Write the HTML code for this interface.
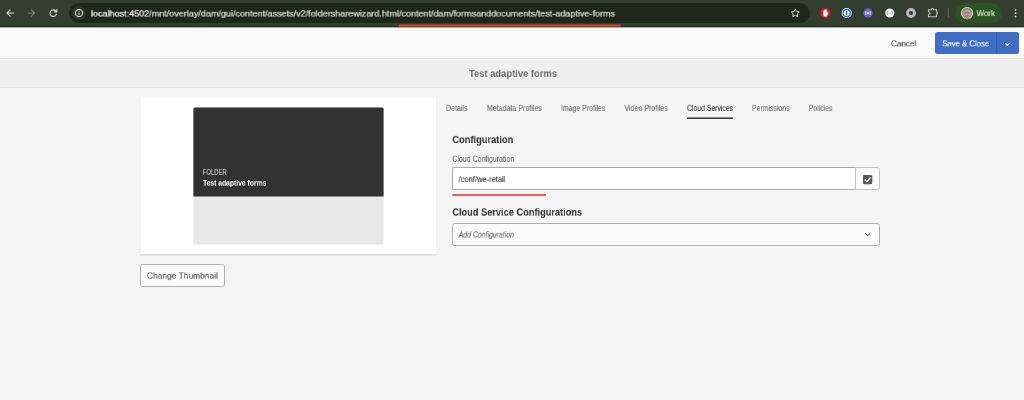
<!DOCTYPE html>
<html lang="en">
<head>
<meta charset="utf-8">
<title>Test adaptive forms</title>
<style>
html,body{margin:0;padding:0}
body{width:1024px;height:400px;position:relative;overflow:hidden;background:#f5f5f5;font-family:"Liberation Sans",sans-serif}
.a{position:absolute}
.t{position:absolute;left:0;top:0;white-space:nowrap;transform-origin:0 0;will-change:transform}
svg{position:absolute;overflow:visible}
</style>
</head>
<body>
<!-- browser toolbar -->
<div class="a" style="left:0;top:0;width:1024px;height:26px;background:#343e2f"></div>
<div class="a" style="left:0;top:26px;width:1024px;height:1px;background:#2a3424"></div>
<div class="a" style="left:69px;top:3px;width:741px;height:20px;border-radius:10px;background:#1e281a"></div>
<div class="a" style="left:72px;top:6px;width:14px;height:14px;border-radius:7px;background:#2c3727"></div>
<!-- nav icons -->
<svg style="left:0;top:0" width="1024" height="27" viewBox="0 0 1024 27">
  <!-- back -->
  <g fill="none" stroke="#d3dacd" stroke-width="1.1" stroke-linecap="round" stroke-linejoin="round">
    <path d="M13.6 13H7.2M10.2 9.8L7 13l3.200 3.200"/>
  </g>
  <!-- forward -->
  <g fill="none" stroke="#76816f" stroke-width="1.1" stroke-linecap="round" stroke-linejoin="round">
    <path d="M28 13h6.400M31.4 9.8L34.6 13l-3.200 3.200"/>
  </g>
  <!-- reload -->
  <g fill="none" stroke="#d3dacd" stroke-width="1.1" stroke-linecap="round" stroke-linejoin="round">
    <path d="M56.100 11.500A3.300 3.300 0 1 0 56.400 14.100"/>
    <path d="M56.800 9.600V11.900H54.500" />
  </g>
  <!-- info -->
  <circle cx="79" cy="13" r="3.650" fill="none" stroke="#e4e9df" stroke-width="1"/>
  <path d="M79 12.500V15" stroke="#e4e9df" stroke-width="0.9" fill="none"/>
  <circle cx="79" cy="11.100" r="0.550" fill="#e4e9df"/>
  <!-- star -->
  <path d="M795.300 9.100l1.250 2.550 2.750 0.350-2.050 1.950 0.550 2.750-2.500-1.350-2.500 1.350 0.550-2.750-2.050-1.950 2.750-0.350z" fill="none" stroke="#d3dacd" stroke-width="1" stroke-linejoin="round"/>
  <!-- red hand ext -->
  <path d="M829.77 14.89L827.09 17.57L823.31 17.57L820.63 14.89L820.63 11.11L823.31 8.43L827.09 8.43L829.77 11.11Z" fill="#d7232a" stroke="#d7232a" stroke-width="0.5" stroke-linejoin="round"/>
  <path d="M823.200 13.900V11.100a0.450 0.450 0 0 1 0.900 0V10.200a0.450 0.450 0 0 1 0.900 0V9.800a0.450 0.450 0 0 1 0.900 0V10.200a0.450 0.450 0 0 1 0.900 0V13.300L827.700 12.400a0.500 0.500 0 0 1 0.700 0.700L826.600 16.400H824.400Q823.200 15.600 823.200 13.900Z" fill="#ffffff"/>
  <!-- 1password -->
  <circle cx="846.700" cy="13" r="5.100" fill="#f4f6f8"/>
  <circle cx="846.700" cy="13" r="3.600" fill="none" stroke="#1a78f0" stroke-width="1.500"/>
  <rect x="846.200" y="10.900" width="1" height="4.200" rx="0.400" fill="#222"/>
  <!-- purple -->
  <circle cx="868" cy="13" r="4.700" fill="#6d60cb"/>
  <path d="M865.700 11v4M870.300 11v4M867.200 12.300h1.600v1.600h-1.600z" stroke="#e9e4ff" stroke-width="0.8" fill="#e9e4ff"/>
  <!-- white -->
  <circle cx="889.800" cy="13" r="4.600" fill="#f7f7f7"/>
  <path d="M887.700 11.300Q886.600 13 887.700 14.700M891.900 11.300Q893 13 891.900 14.700" stroke="#8f8f8f" stroke-width="0.8" fill="none" stroke-linecap="round"/><circle cx="889" cy="13" r="0.500" fill="#9a9a9a"/><circle cx="890.600" cy="13" r="0.500" fill="#9a9a9a"/>
  <!-- gray ring -->
  <circle cx="911" cy="13" r="3.500" fill="none" stroke="#bcbcbc" stroke-width="2.800"/>
  <!-- puzzle -->
  <path d="M928.500 9.700H931.400A1.100 1.100 0 0 1 933.600 9.700H936.500V12A1.100 1.100 0 0 1 936.500 14.200V16.800H928.500V14.700L930.300 13.150L928.500 11.600Z" fill="none" stroke="#b9c3b0" stroke-width="1.100" stroke-linejoin="miter"/>
  <!-- separator -->
  <rect x="948.100" y="8.100" width="1" height="9.600" fill="#59644f"/>
  <!-- dots -->
  <circle cx="1015.500" cy="9.800" r="0.900" fill="#d9dfd3"/>
  <circle cx="1015.500" cy="13.150" r="0.900" fill="#d9dfd3"/>
  <circle cx="1015.500" cy="16.500" r="0.900" fill="#d9dfd3"/>
</svg>
<!-- profile pill -->
<div class="a" style="left:955px;top:3px;width:47.300px;height:20px;border-radius:10px;background:#2c5324"></div>
<svg style="left:960.800px;top:6.900px" width="12.200" height="12.200" viewBox="0 0 12.200 12.200">
  <defs><clipPath id="av"><circle cx="6.100" cy="6.100" r="5.400"/></clipPath></defs>
  <circle cx="6.100" cy="6.100" r="6.100" fill="#e3e3e3"/>
  <g clip-path="url(#av)">
    <rect x="0" y="0" width="12.200" height="12.200" fill="#a9a7a4"/>
    <ellipse cx="6.100" cy="3.200" rx="4.900" ry="3" fill="#8f8e8c"/>
    <ellipse cx="6.100" cy="7.200" rx="4.200" ry="4.400" fill="#bf978a"/>
    <rect x="3.200" y="5.500" width="5.800" height="0.800" fill="#86695f"/>
    <ellipse cx="6.100" cy="9" rx="2.200" ry="1.100" fill="#a77769"/>
    <path d="M0 12.200V11.300Q6.100 10.300 12.200 11.300V12.200Z" fill="#6a5a58"/>
  </g>
</svg>
<!-- red line under url -->


<!-- action bar -->
<div class="a" style="left:0;top:27px;width:1024px;height:31px;background:#fafafa"></div>
<div class="a" style="left:0;top:27px;width:1024px;height:1px;background:#a4a9a0"></div>
<div class="a" style="left:0;top:28px;width:1024px;height:1px;background:#ffffff"></div>
<div class="a" style="left:0;top:58px;width:1024px;height:29.500px;background:#efefef;border-top:1px solid #e6e6e6;border-bottom:1px solid #e1e1e1;box-sizing:border-box"></div>
<!-- save & close button -->
<div class="a" style="left:935px;top:32px;width:84px;height:22px;border-radius:2.500px;background:#3f6cc4"></div>
<div class="a" style="left:995.800px;top:32px;width:0.700px;height:22px;background:#3560b3"></div>
<svg style="left:1005.300px;top:42.900px" width="5" height="3" viewBox="0 0 5 3"><path d="M0.500 0.500L2.400 2.400l1.900-1.900" fill="none" stroke="#fff" stroke-width="1.150" stroke-linecap="round" stroke-linejoin="round"/></svg>

<!-- left card -->
<svg style="left:0;top:0" width="1024" height="400" viewBox="0 0 1024 400">
  <rect x="139.900" y="97.300" width="296.900" height="158" rx="0.500" fill="#000" opacity="0.050"/>
  <rect x="140.300" y="254" width="296.100" height="1.300" fill="#000" opacity="0.130"/>
  <rect x="140.300" y="97.200" width="296.100" height="157.200" fill="#ffffff"/>
  <rect x="193.400" y="107.500" width="190.200" height="136.900" rx="1.500" fill="#e8e8e8"/>
  <path d="M193.400 196.600V109A1.500 1.500 0 0 1 194.900 107.500H382.100A1.500 1.500 0 0 1 383.600 109V196.600Z" fill="#323232"/>
</svg>
<!-- change thumbnail button -->
<div class="a" style="left:140px;top:264px;width:85px;height:23px;box-sizing:border-box;border:1px solid #b1b1b1;border-radius:2.500px;background:#fbfbfb"></div>

<!-- tabs underline -->


<!-- cloud configuration input -->
<div class="a" style="left:452px;top:167px;width:404px;height:23px;box-sizing:border-box;border:1px solid #a8a8a8;border-right:0;border-radius:2px 0 0 2px;background:#fff"></div>
<div class="a" style="left:855px;top:167px;width:25px;height:23px;box-sizing:border-box;border:1px solid #c2c2c2;border-radius:0 2.500px 2.500px 0;background:#fafafa"></div>
<svg style="left:862.900px;top:175px" width="10" height="10" viewBox="0 0 10 10"><rect x="0" y="0" width="9.300" height="9.300" rx="1.400" fill="#5a5a5a"/><path d="M2.100 4.900l1.800 1.800 3.300-3.800" fill="none" stroke="#fff" stroke-width="1.300" stroke-linecap="round" stroke-linejoin="round"/></svg>
<!-- red invalid line -->


<!-- select -->
<div class="a" style="left:452px;top:223px;width:428px;height:23px;box-sizing:border-box;border:1px solid #afafaf;border-radius:2.500px;background:#fbfbfb"></div>
<svg style="left:864.900px;top:232.900px" width="6" height="4" viewBox="0 0 6 4"><path d="M0.500 0.500L2.700 2.700l2.200-2.200" fill="none" stroke="#6a6a6a" stroke-width="1.100" stroke-linecap="round" stroke-linejoin="round"/></svg>

<!-- thin lines (fractional, antialiased) -->
<svg style="left:0;top:0" width="1024" height="400" viewBox="0 0 1024 400">
  <rect x="398.900" y="24.600" width="221.800" height="1.900" fill="#ee4422"/>
  <rect x="687" y="117.450" width="45.900" height="1.550" fill="#3c3c3c"/>
  <rect x="452.300" y="194.100" width="93.700" height="1.800" fill="#e8543c"/>
</svg>
<div class="t" id="url" style="font-size:10.19px;line-height:13px;font-weight:400;color:#dde1d8;transform:translate(91.00px,8.64px) scale(0.8869,0.7863);-webkit-text-stroke:0.24px;"><span style="color:#ffffff">localhost:4502</span>/mnt/overlay/dam/gui/content/assets/v2/foldersharewizard.html/content/dam/formsanddocuments/test-adaptive-forms</div>
<div class="t" id="work" style="font-size:10.19px;line-height:13px;font-weight:400;color:#e6eedf;transform:translate(976.60px,8.44px) scale(0.7767,0.7765);-webkit-text-stroke:0.15px;">Work</div>
<div class="t" id="cancel" style="font-size:11.65px;line-height:14px;font-weight:400;color:#4e4e4e;transform:translate(891.00px,38.08px) scale(0.6952,0.7568);-webkit-text-stroke:0.17px;">Cancel</div>
<div class="t" id="save" style="font-size:11.65px;line-height:14px;font-weight:400;color:#ffffff;transform:translate(942.20px,38.08px) scale(0.6664,0.7568);-webkit-text-stroke:0.20px;">Save &amp; Close</div>
<div class="t" id="title" style="font-size:13.10px;line-height:16px;font-weight:700;color:#6c6c6c;transform:translate(469.00px,67.45px) scale(0.7170,0.7874);">Test adaptive forms</div>
<div class="t" id="tab1" style="font-size:10.19px;line-height:13px;font-weight:400;color:#6a6a6a;transform:translate(446.00px,103.14px) scale(0.6947,0.7863);-webkit-text-stroke:0.14px;">Details</div>
<div class="t" id="tab2" style="font-size:10.19px;line-height:13px;font-weight:400;color:#6a6a6a;transform:translate(486.90px,103.14px) scale(0.6936,0.7863);-webkit-text-stroke:0.14px;">Metadata Profiles</div>
<div class="t" id="tab3" style="font-size:10.19px;line-height:13px;font-weight:400;color:#6a6a6a;transform:translate(561.00px,103.14px) scale(0.6814,0.7863);-webkit-text-stroke:0.14px;">Image Profiles</div>
<div class="t" id="tab4" style="font-size:10.19px;line-height:13px;font-weight:400;color:#6a6a6a;transform:translate(624.50px,103.14px) scale(0.6919,0.7863);-webkit-text-stroke:0.14px;">Video Profiles</div>
<div class="t" id="tab5" style="font-size:10.19px;line-height:13px;font-weight:400;color:#2c2c2c;transform:translate(687.00px,103.14px) scale(0.6723,0.7863);-webkit-text-stroke:0.14px;">Cloud Services</div>
<div class="t" id="tab6" style="font-size:10.19px;line-height:13px;font-weight:400;color:#6a6a6a;transform:translate(752.00px,103.14px) scale(0.6786,0.7863);-webkit-text-stroke:0.14px;">Permissions</div>
<div class="t" id="tab7" style="font-size:10.19px;line-height:13px;font-weight:400;color:#6a6a6a;transform:translate(808.80px,103.14px) scale(0.6731,0.7863);-webkit-text-stroke:0.14px;">Policies</div>
<div class="t" id="h1" style="font-size:13.10px;line-height:16px;font-weight:700;color:#2c2c2c;transform:translate(452.30px,133.38px) scale(0.7107,0.8103);">Configuration</div>
<div class="t" id="lbl" style="font-size:10.19px;line-height:13px;font-weight:400;color:#6a6a6a;transform:translate(452.30px,153.94px) scale(0.6895,0.7863);-webkit-text-stroke:0.14px;">Cloud Configuration</div>
<div class="t" id="val" style="font-size:10.19px;line-height:13px;font-weight:400;color:#2c2c2c;transform:translate(458.60px,174.34px) scale(0.7390,0.7765);-webkit-text-stroke:0.13px;">/conf/we-retail</div>
<div class="t" id="h2" style="font-size:13.10px;line-height:16px;font-weight:700;color:#2c2c2c;transform:translate(452.30px,205.88px) scale(0.7052,0.8103);">Cloud Service Configurations</div>
<div class="t" id="ph" style="font-size:10.19px;line-height:13px;font-weight:400;color:#6e6e6e;font-style:italic;transform:translate(458.70px,229.64px) scale(0.6778,0.7863);-webkit-text-stroke:0.14px;">Add Configuration</div>
<div class="t" id="folder" style="font-size:10.19px;line-height:13px;font-weight:400;color:#d4d4d4;transform:translate(202.80px,167.33px) scale(0.5768,0.7371);-webkit-text-stroke:0.15px;">FOLDER</div>
<div class="t" id="fname" style="font-size:10.19px;line-height:13px;font-weight:700;color:#ffffff;transform:translate(203.00px,178.43px) scale(0.6639,0.7175);">Test adaptive forms</div>
<div class="t" id="chg" style="font-size:11.65px;line-height:14px;font-weight:400;color:#525252;transform:translate(146.90px,270.09px) scale(0.7233,0.7740);-webkit-text-stroke:0.16px;">Change Thumbnail</div>
</body>
</html>
